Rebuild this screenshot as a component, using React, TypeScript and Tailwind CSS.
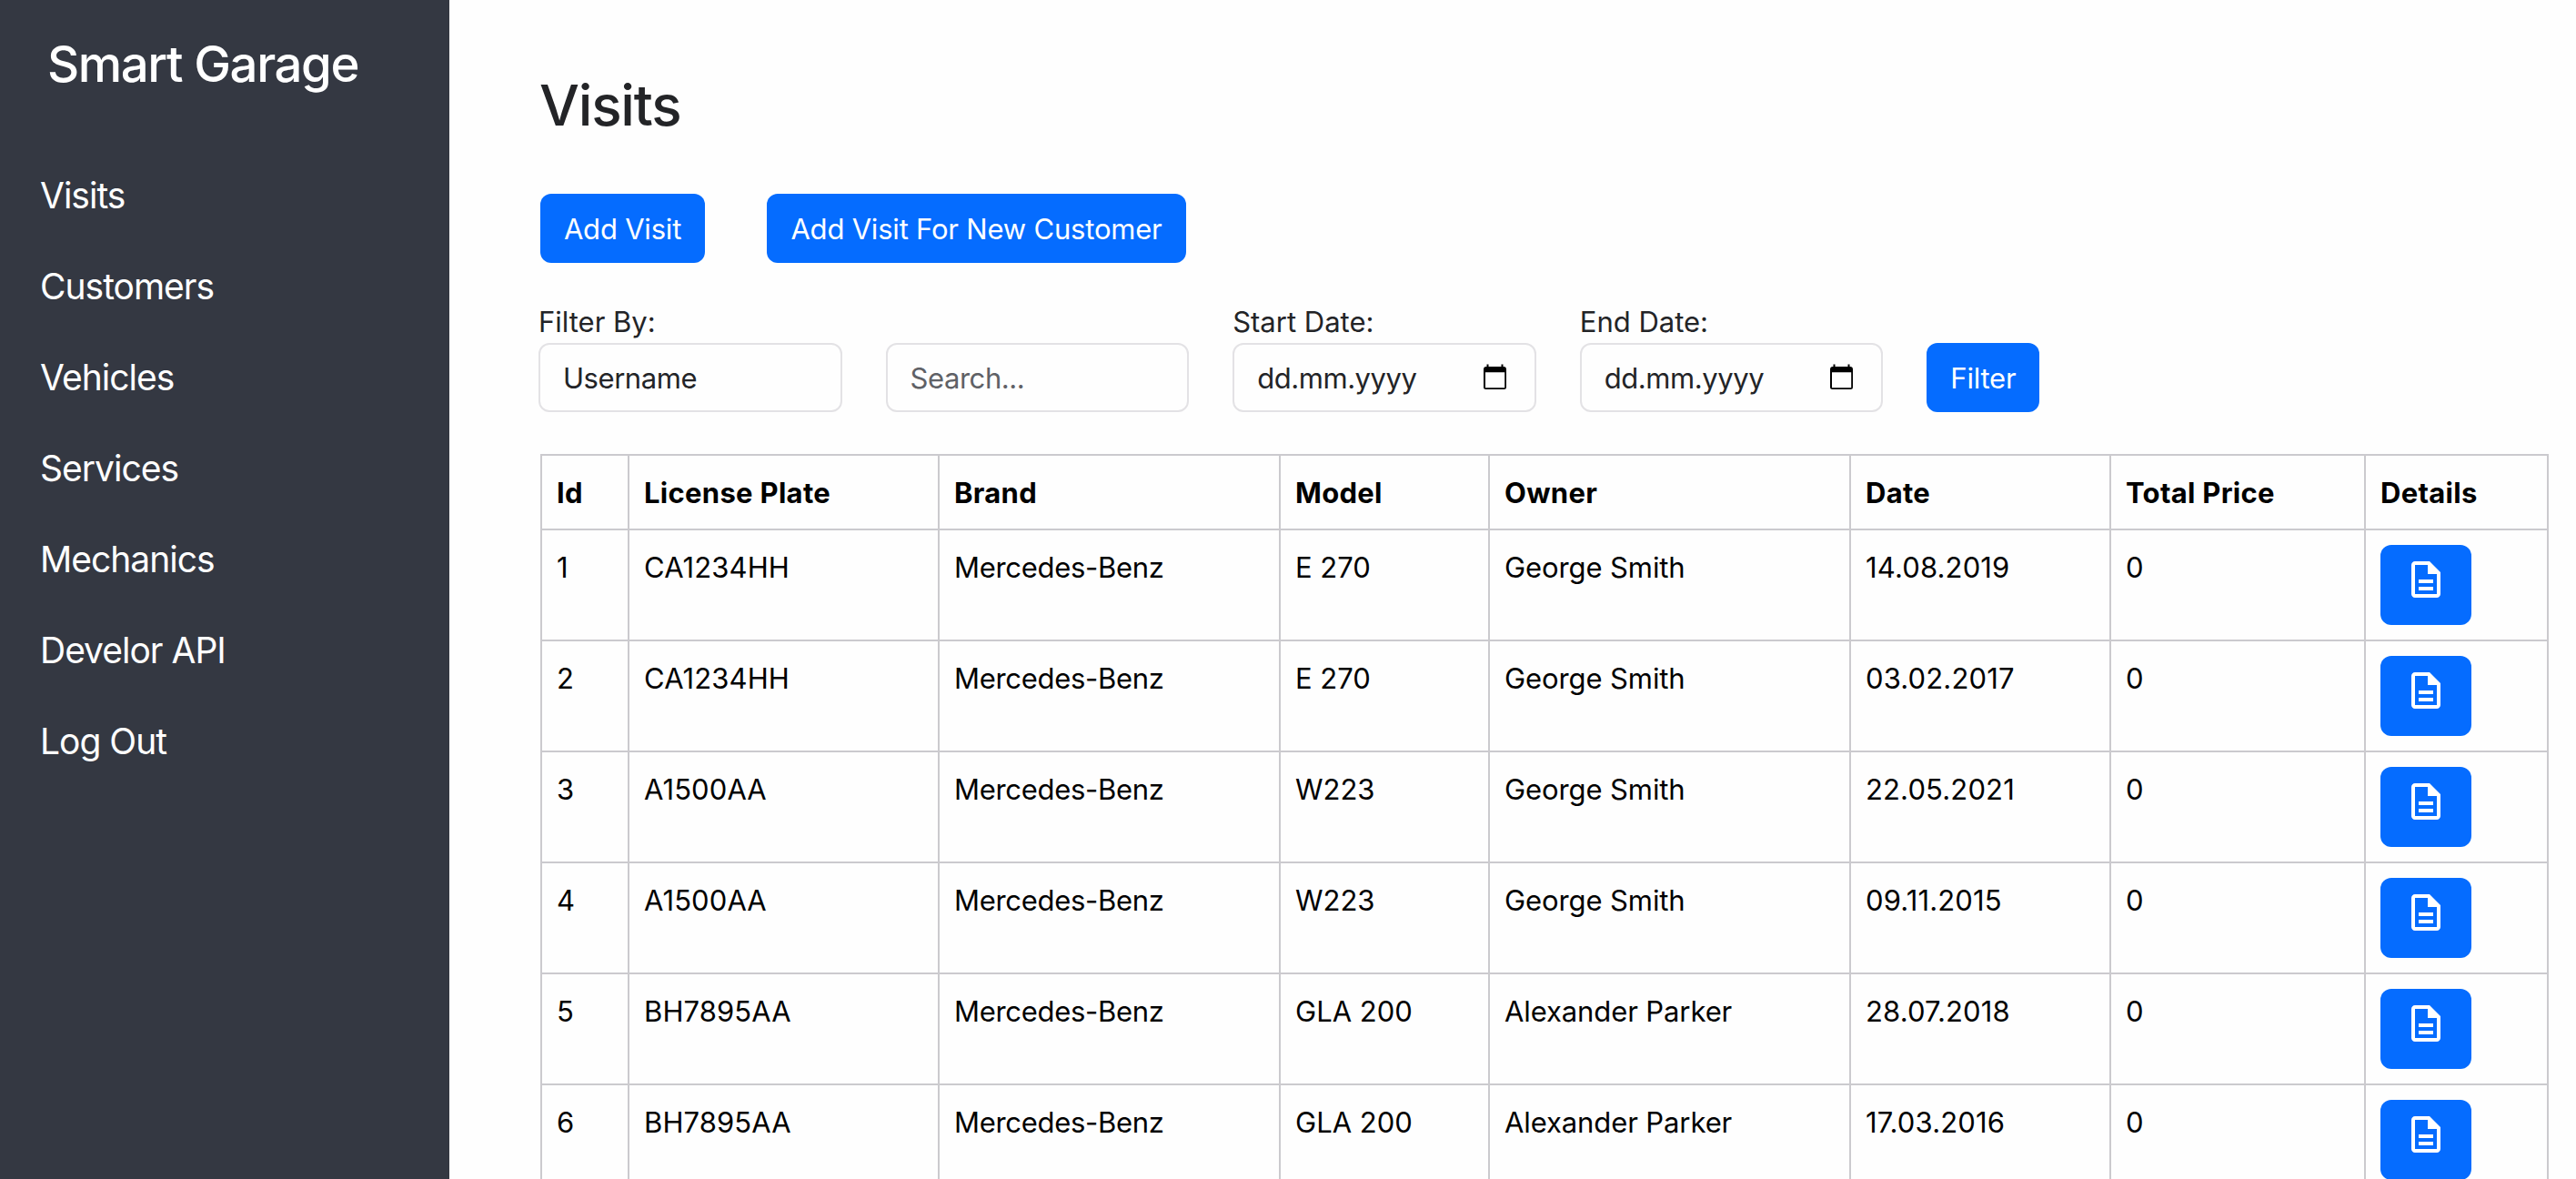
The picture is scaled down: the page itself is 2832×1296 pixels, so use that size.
import React from 'react';
import { MdOutlineDescription } from 'react-icons/md';

interface Visit {
  id: number;
  plate: string;
  brand: string;
  model: string;
  owner: string;
  date: string;
  total: number;
}

const navItems = ['Visits', 'Customers', 'Vehicles', 'Services', 'Mechanics', 'Develor API', 'Log Out'];

const visits: Visit[] = [
  { id: 1, plate: 'CA1234HH', brand: 'Mercedes-Benz', model: 'E 270', owner: 'George Smith', date: '14.08.2019', total: 0 },
  { id: 2, plate: 'CA1234HH', brand: 'Mercedes-Benz', model: 'E 270', owner: 'George Smith', date: '03.02.2017', total: 0 },
  { id: 3, plate: 'A1500AA', brand: 'Mercedes-Benz', model: 'W223', owner: 'George Smith', date: '22.05.2021', total: 0 },
  { id: 4, plate: 'A1500AA', brand: 'Mercedes-Benz', model: 'W223', owner: 'George Smith', date: '09.11.2015', total: 0 },
  { id: 5, plate: 'BH7895AA', brand: 'Mercedes-Benz', model: 'GLA 200', owner: 'Alexander Parker', date: '28.07.2018', total: 0 },
  { id: 6, plate: 'BH7895AA', brand: 'Mercedes-Benz', model: 'GLA 200', owner: 'Alexander Parker', date: '17.03.2016', total: 0 },
];

const columns = [
  { label: 'Id', width: 'w-[96px]' },
  { label: 'License Plate', width: 'w-[341px]' },
  { label: 'Brand', width: 'w-[375px]' },
  { label: 'Model', width: 'w-[230px]' },
  { label: 'Owner', width: 'w-[397px]' },
  { label: 'Date', width: 'w-[286px]' },
  { label: 'Total Price', width: 'w-[280px]' },
  { label: 'Details', width: 'w-[201px]' },
];

const CalendarIcon = () => (
  <svg width="25" height="30" viewBox="0 0 25 30">
    <path
      d="M3.5 0.5h2v2.5h14V0.5h2v2.5h.5a3 3 0 0 1 3 3v19.5a2.5 2.5 0 0 1-2.5 2.5h-20A2.5 2.5 0 0 1 0 25.5V6a3 3 0 0 1 3-3h.5zM2 9.2v17h21.2v-17z"
      fill="#000"
      fillRule="evenodd"
    />
  </svg>
);

const Sidebar = () => (
  <aside className="w-[494px] shrink-0 bg-[#343842] text-white">
    <h2 className="pt-[36px] pl-[52px] text-[54.5px] leading-[68px] font-medium tracking-[-1.4px]">Smart Garage</h2>
    <nav className="mt-[61px] flex flex-col pl-[44px]">
      {navItems.map(item => (
        <a key={item} href="#" className="h-[100px] text-[39px] leading-[100px] tracking-[-1px]">
          {item}
        </a>
      ))}
    </nav>
  </aside>
);

interface ButtonProps {
  width: string;
  children: React.ReactNode;
}

const Button = ({ width, children }: ButtonProps) => (
  <button className={`${width} h-[76px] rounded-xl bg-[#056cff] pt-[2px] text-white whitespace-nowrap`}>
    {children}
  </button>
);

interface FieldProps {
  label?: string;
  children: React.ReactNode;
}

const Field = ({ label, children }: FieldProps) => (
  <div className="w-[333.6px]">
    <div className="h-[48px] pt-[1px] tracking-normal">{label}</div>
    <div className="flex h-[76px] items-center justify-between rounded-xl border-2 border-[#e3e2e5] pr-[31px] pl-[25px] tracking-[-0.45px]">
      {children}
    </div>
  </div>
);

export default function App() {
  return (
    <div className="flex h-[1296px] w-[2832px] overflow-hidden bg-[#fefefe] font-['Inter','Liberation_Sans',sans-serif] text-[31px] leading-[48px] tracking-[-0.2px] text-[#232427]">
      <Sidebar />
      <main className="flex-1 pt-[78px] pl-[100px]">
        <h1 className="-ml-[1px] text-[62px] leading-[76px] font-medium tracking-[-1.2px]">Visits</h1>

        <div className="mt-[59px] flex gap-[68px]">
          <Button width="w-[181px]">Add Visit</Button>
          <Button width="w-[461px]">Add Visit For New Customer</Button>
        </div>

        <div className="mt-[40px] -ml-[2px] flex items-end gap-[48px]">
          <Field label="Filter By:">
            <span className="pt-[2px]">Username</span>
          </Field>
          <Field>
            <span className="pt-[2px] text-[#5f6166]">Search...</span>
          </Field>
          <Field label="Start Date:">
            <span className="pt-[2px]">dd.mm.yyyy</span>
            <CalendarIcon />
          </Field>
          <Field label="End Date:">
            <span className="pt-[2px]">dd.mm.yyyy</span>
            <CalendarIcon />
          </Field>
          <Button width="w-[124px]">Filter</Button>
        </div>

        <table className="mt-[46px] w-[2208px] table-fixed border-collapse text-left align-top tracking-normal text-black">
          <thead>
            <tr className="h-[82px]">
              {columns.map(col => (
                <th key={col.label} className={`${col.width} border-2 border-[#cbcace] px-[16px] pt-[2px] pb-0 font-bold tracking-[0.3px]`}>
                  {col.label}
                </th>
              ))}
            </tr>
          </thead>
          <tbody>
            {visits.map(visit => (
              <tr key={visit.id} className="h-[122px] align-top">
                <td className="border-2 border-[#cbcace] px-[16px] pt-[17px]">{visit.id}</td>
                <td className="border-2 border-[#cbcace] px-[16px] pt-[17px] tracking-[0.1px]">{visit.plate}</td>
                <td className="border-2 border-[#cbcace] px-[16px] pt-[17px] tracking-[-0.3px]">{visit.brand}</td>
                <td className="border-2 border-[#cbcace] px-[16px] pt-[17px]">{visit.model}</td>
                <td className="border-2 border-[#cbcace] px-[16px] pt-[17px] tracking-[-0.1px]">{visit.owner}</td>
                <td className="border-2 border-[#cbcace] px-[16px] pt-[17px] tracking-[0.15px]">{visit.date}</td>
                <td className="border-2 border-[#cbcace] px-[16px] pt-[17px]">{visit.total}</td>
                <td className="border-2 border-[#cbcace] px-[16px] pt-[16px]">
                  <button className="block h-[88px] w-[100px] rounded-xl bg-[#056cff] px-[26px] pb-[12px] text-white">
                    <MdOutlineDescription size={48} />
                  </button>
                </td>
              </tr>
            ))}
          </tbody>
        </table>
      </main>
    </div>
  );
}
